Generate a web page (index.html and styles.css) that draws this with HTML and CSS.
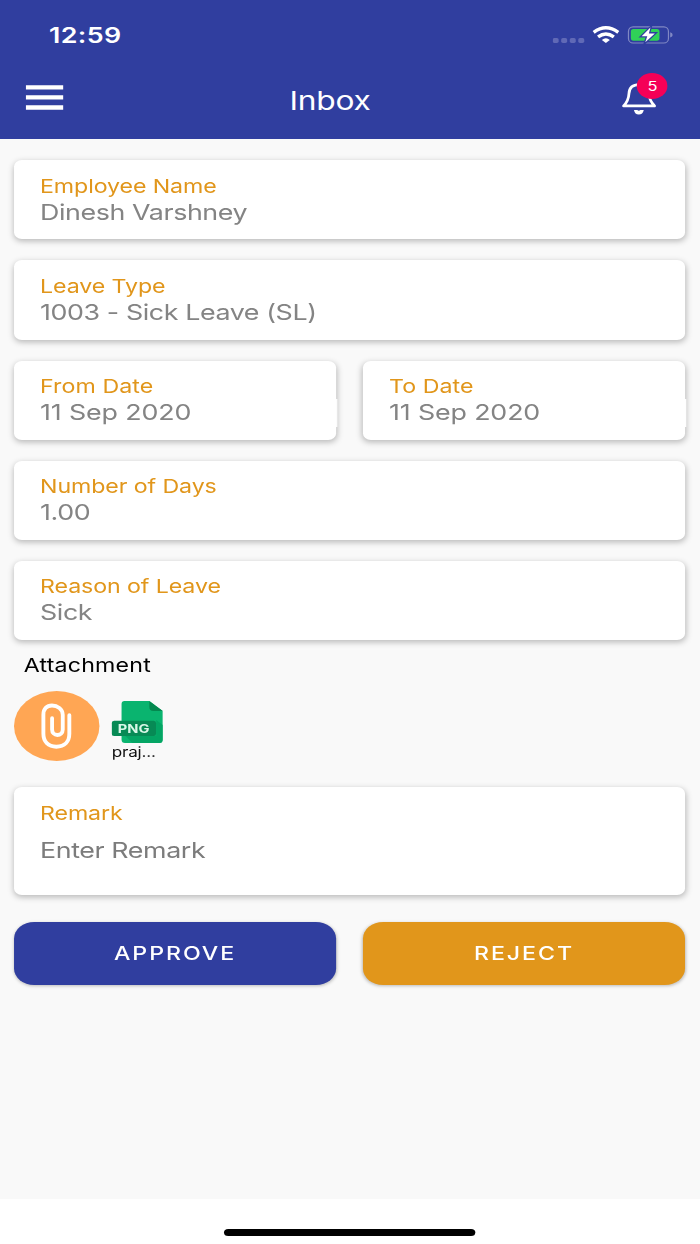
FILE: index.html
```html
<!DOCTYPE html>
<html lang="en">
<head>
<meta charset="utf-8">
<title>Inbox</title>
<link rel="stylesheet" href="styles.css">
</head>
<body>
<div class="screen">
  <header class="header">
    <div class="status">
      <span class="time">12:59</span>
      <svg class="status-icons" viewBox="553 24 120 22" preserveAspectRatio="none">
        <g fill="#6069b6"><rect x="553" y="38" width="6" height="4.9" rx="1.7"/><rect x="561.5" y="38" width="6" height="4.9" rx="1.7"/><rect x="570.1" y="38" width="6" height="4.9" rx="1.7"/><rect x="578.6" y="38" width="6" height="4.9" rx="1.7"/></g>
        <g fill="none" stroke="#fff" stroke-width="3.4"><path d="M594 32.3Q606.2 23.2 618.6 32.3"/><path d="M598.4 36.9Q606.2 31 614.2 36.9"/></g>
        <path fill="#fff" d="M602.2 40Q606.2 36.6 610.2 40L606.2 43Z"/>
        <rect x="628.8" y="26.8" width="40" height="16.2" rx="4.6" fill="none" stroke="#8088c4" stroke-width="1.2"/>
        <rect x="631.2" y="29.1" width="28.6" height="11.6" rx="2.6" fill="#30d158"/>
        <path fill="#8088c4" d="M670.5 32.3Q673 33 673 34.9T670.5 37.6Z"/>
        <path fill="#fff" stroke="#303e9f" stroke-width="2.6" paint-order="stroke" d="M650.8 27.6L642 36.2H647.6L645.6 42.3L655.2 33.4H649.2Z"/>
      </svg>
    </div>
    <nav class="nav">
      <svg class="menu" viewBox="0 0 38 25" preserveAspectRatio="none"><path fill="#fff" d="M.2 .2H37.8V4.6H.2ZM.2 10.2H37.8V14.6H.2ZM.2 20.2H37.8V24.7H.2Z"/></svg>
      <h1 class="title">Inbox</h1>
      <div class="bell-wrap">
        <svg class="bell" viewBox="621 82 36 34" preserveAspectRatio="none">
          <path fill="none" stroke="#fff" stroke-width="2.8" stroke-linejoin="round" d="M623.6 105.9C628 101.5 628.7 98.5 629 93.5C629.3 87.5 633 84.7 639.3 84.7C645.4 84.7 648.4 87.8 648.8 93.5C649.2 98.5 650.3 101.5 654.6 105.9Z"/>
          <path fill="#fff" d="M634 110H637.3Q638.8 111.4 640.4 110H643.8Q642.8 114.5 638.8 114.5T634 110Z"/>
        </svg>
        <span class="badge">5</span>
      </div>
    </nav>
  </header>

  <main class="content">
    <section class="card"><div class="label">Employee Name</div><div class="value">Dinesh Varshney</div></section>
    <section class="card"><div class="label">Leave Type</div><div class="value">1003 - Sick Leave (SL)</div></section>
    <div class="pair">
      <section class="card date"><div class="label">From Date</div><div class="value">11 Sep 2020</div></section>
      <section class="card date"><div class="label">To Date</div><div class="value">11 Sep 2020</div></section>
    </div>
    <section class="card"><div class="label">Number of Days</div><div class="value">1.00</div></section>
    <section class="card"><div class="label">Reason of Leave</div><div class="value">Sick</div></section>

    <h2 class="attach-title">Attachment</h2>
    <div class="attachments">
      <div class="clip">
        <svg class="clip-icon" viewBox="0 0 32 48" preserveAspectRatio="none"><path fill="none" stroke="#fff" stroke-width="4" stroke-linecap="round" d="M29.4 12.4V31.5C29.4 39.5 24.5 44.6 16 44.6S2.6 39.5 2.6 31.5V12C2.6 6 6 2.6 11.5 2.6S22.6 6 22.6 12V27C22.6 30.5 20 32.6 17 32.6S11.6 30.5 11.6 27V15.5"/></svg>
      </div>
      <div class="file">
        <div class="file-pic">
          <svg class="file-icon" viewBox="0 0 52 42" preserveAspectRatio="none">
            <path fill="#0ab46f" d="M13 0H38L51.5 10V38.5Q51.5 42 48 42H13.5Q10 42 10 38.5V3Q10 0 13 0Z"/>
            <path fill="#04a564" d="M45 19L51.5 24V38.5Q51.5 42 48 42H21L14 35H45Z"/>
            <path fill="#04884f" d="M38 0L51.5 10H42Q38 10 38 6Z"/>
            <rect x="0" y="19.8" width="44.8" height="15.3" rx="2.5" fill="#078a55"/>
          </svg>
          <span class="file-type">PNG</span>
        </div>
        <span class="file-name">praj...</span>
      </div>
    </div>

    <section class="card remark"><div class="label">Remark</div><div class="value">Enter Remark</div></section>
    <div class="pair buttons">
      <button class="btn approve">APPROVE</button>
      <button class="btn reject">REJECT</button>
    </div>
  </main>
  <footer class="footer"><div class="home-bar"></div></footer>
</div>
</body>
</html>
```
FILE: styles.css
```css
* { box-sizing: border-box; }
html, body { margin: 0; width: 700px; height: 1244px; overflow: hidden; }
/* The whole screen is laid out at 573.77px and widened to 700px. */
.screen {
  display: flex;
  flex-direction: column;
  width: 573.77px;
  height: 1244px;
  transform: scaleX(1.22);
  transform-origin: 0 0;
  background: #f9f9f9;
  font-family: Inter, "Liberation Sans", sans-serif;
}
.header { height: 139.3px; flex: none; background: #303e9f; color: #fff; }
.status { display: flex; justify-content: space-between; align-items: flex-start; height: 70px; padding: 21px 22.1px 0 40.2px; }
.time { font-size: 22px; line-height: 28px; font-weight: 600; letter-spacing: .3px; }
.status-icons { width: 98.36px; height: 22px; margin-top: 3px; }
.nav { display: grid; grid-template-columns: 1fr auto 1fr; padding: 0 35.2px 0 21.3px; }
.menu { width: 31.15px; height: 25px; margin-top: 15px; }
.title { margin: 15px 18.8px 0 0; font-size: 26px; line-height: 32px; font-weight: 400; letter-spacing: -.2px; }
.bell-wrap { position: relative; justify-self: end; width: 29.5px; height: 34px; margin-top: 12px; }
.bell { display: block; width: 29.5px; height: 34px; }
.badge {
  position: absolute; left: 13.2px; top: -8.6px;
  width: 25.1px; height: 25.1px; border-radius: 50%;
  background: #f50057; font-size: 13.5px; line-height: 26px; text-align: center;
}
.content { flex: 1; padding: 20.9px 12.77px 0 11px; transform: translateX(.5px); }
.card {
  height: 79.3px; margin-bottom: 20.9px; padding: 13.5px 0 0 21.3px;
  border-radius: 6.5px; background: #fff;
  box-shadow: 0 2px 6px rgba(0, 0, 0, .28);
}
.label { height: 25px; font-size: 19px; line-height: 25px; color: #e1961b; letter-spacing: -.08px; white-space: nowrap; }
.value { font-size: 22px; line-height: 26px; color: #848484; letter-spacing: -.34px; white-space: nowrap; }
.pair { display: grid; grid-template-columns: 1fr 1fr; gap: 22px; }
.date { position: relative; }
.date .label { letter-spacing: .05px; }
.date .value { letter-spacing: -.12px; }
.date::after { content: ""; position: absolute; right: -1px; top: 38px; width: 1px; height: 28px; background: #fff; }
.attach-title { margin: -8px 0 0 8px; font-size: 19px; line-height: 25px; font-weight: 400; letter-spacing: .15px; color: #000; }
.attachments { display: flex; gap: 10px; margin-top: 13.2px; height: 96px; }
.clip { display: flex; justify-content: center; width: 70px; height: 69.7px; padding-top: 11.5px; border-radius: 50%; background: #ffa654; }
.clip-icon { width: 25.4px; height: 47px; }
.file { padding-top: 9.5px; width: 44px; }
.file-pic { position: relative; height: 42px; }
.file-icon { display: block; width: 42.3px; height: 42px; }
.file-type { position: absolute; left: 0; top: 19px; width: 36px; text-align: center; color: #d9f7e8; font-size: 12px; line-height: 17px; font-weight: 700; }
.file-name { display: block; font-size: 14px; line-height: 17px; letter-spacing: -.15px; color: #111; }
.remark { height: 107.3px; margin-bottom: 27.7px; }
.remark .value { margin-top: 11px; color: #7c7c7c; }
.btn {
  height: 62.5px; padding: 0; border: 0; border-radius: 16.5px;
  color: #fff; font: 500 19px/61px Inter, "Liberation Sans", sans-serif; letter-spacing: 1.6px;
  box-shadow: 0 1px 3px rgba(0, 0, 0, .25);
}
.approve { background: #303e9f; }
.reject { background: #e1961b; }
.footer { flex: none; height: 45px; padding: 30px 0 0; background: #fff; }
.home-bar { width: 206.5px; height: 7px; margin: 0 auto; border-radius: 3.5px; background: #000; transform: translateX(-.4px); }
```
